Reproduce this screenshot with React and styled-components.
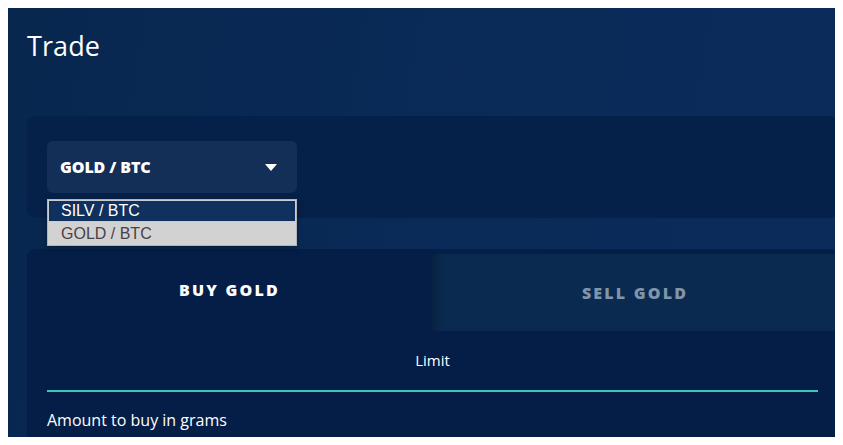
import React from "react";
import styled, { createGlobalStyle } from "styled-components";

const Global = createGlobalStyle`
  html, body { margin: 0; padding: 0; background: #ffffff; }
  body { margin: 8px; font-family: "Open Sans", "Lato", sans-serif; }
  * { box-sizing: border-box; }
`;

const Panel = styled.div`
  width: 828px;
  height: 429px;
  overflow: hidden;
  background: linear-gradient(100deg, #08274f 0%, #0a2a58 55%, #0b2c5b 100%);
  padding: 21px 0 0 19px;
  color: #ffffff;
`;

const Title = styled.h1`
  margin: 0;
  font-size: 27px;
  line-height: 34px;
  font-weight: 500;
  letter-spacing: 0.1px;
  color: #ffffff;
`;

const PairCard = styled.section`
  position: relative;
  margin-top: 53px;
  width: 811px;
  height: 102px;
  padding: 25px 20px;
  background: #062149;
  border-radius: 8px;
`;

const SelectBox = styled.div`
  width: 250px;
  height: 52px;
  border-radius: 6px;
  background: #132f58;
  padding: 0 20px 0 13px;
  display: flex;
  align-items: center;
  justify-content: space-between;
  font-size: 16px;
  font-weight: 800;
  letter-spacing: -0.1px;
`;

const OptionList = styled.ul`
  position: absolute;
  left: 20px;
  top: 83px;
  width: 250px;
  margin: 0;
  padding: 0;
  list-style: none;
  border: 1px solid #b4b4b4;
  background: #d2d2d2;
  box-shadow: 0 2px 6px rgba(0, 0, 0, 0.35);
  font-family: "Liberation Sans", Arial, sans-serif;
  font-size: 16px;
  z-index: 2;
`;

const Option = styled.li`
  height: ${(p) => (p.$active ? 22 : 23)}px;
  line-height: ${(p) => (p.$active ? 20 : 23)}px;
  background: ${(p) => (p.$active ? "#10305d" : "#d2d2d2")};
  color: ${(p) => (p.$active ? "#ffffff" : "#4a4048")};
  border: ${(p) => (p.$active ? "1px solid #c8ccd4" : "none")};
  padding-left: ${(p) => (p.$active ? 12 : 13)}px;
`;

const TradeBox = styled.section`
  margin-top: 31px;
  width: 811px;
  height: 200px;
  background: #041e47;
  border-radius: 8px 8px 0 0;
`;

const Tabs = styled.div`
  display: flex;
  align-items: flex-start;
`;

const Tab = styled.div`
  flex: ${(p) => (p.$active ? "0 0 405px" : "1 1 auto")};
  height: ${(p) => (p.$active ? 82 : 77)}px;
  margin-top: ${(p) => (p.$active ? 0 : 5)}px;
  display: flex;
  align-items: center;
  justify-content: center;
  background: ${(p) => (p.$active ? "transparent" : "#0a2a50")};
  box-shadow: ${(p) => (p.$active ? "none" : "inset 10px 0 8px -6px rgba(0,0,0,0.25)")};
  color: ${(p) => (p.$active ? "#ffffff" : "#8094ab")};
  font-size: 16px;
  font-weight: 800;
  letter-spacing: 2.2px;
`;

const OrderType = styled.div`
  margin: 0 20px;
  padding: 19px 0 20px;
  text-align: center;
  font-size: 15px;
  font-weight: 500;
  line-height: 20px;
  border-bottom: 2px solid #3cc8b4;
`;

const Label = styled.div`
  margin: 18px 20px 0;
  font-size: 16px;
  font-weight: 500;
  line-height: 20px;
`;

const Caret = () => (
  <svg width="12" height="7" viewBox="0 0 12 7">
    <path d="M0 0 H12 L6 7 Z" fill="#ffffff" />
  </svg>
);

export default function App() {
  return (
    <>
      <Global />
      <Panel>
        <Title>Trade</Title>
        <PairCard>
          <SelectBox>
            <span>GOLD / BTC</span>
            <Caret />
          </SelectBox>
          <OptionList>
            <Option $active>SILV / BTC</Option>
            <Option>GOLD / BTC</Option>
          </OptionList>
        </PairCard>
        <TradeBox>
          <Tabs>
            <Tab $active>BUY GOLD</Tab>
            <Tab>SELL GOLD</Tab>
          </Tabs>
          <OrderType>Limit</OrderType>
          <Label>Amount to buy in grams</Label>
        </TradeBox>
      </Panel>
    </>
  );
}
